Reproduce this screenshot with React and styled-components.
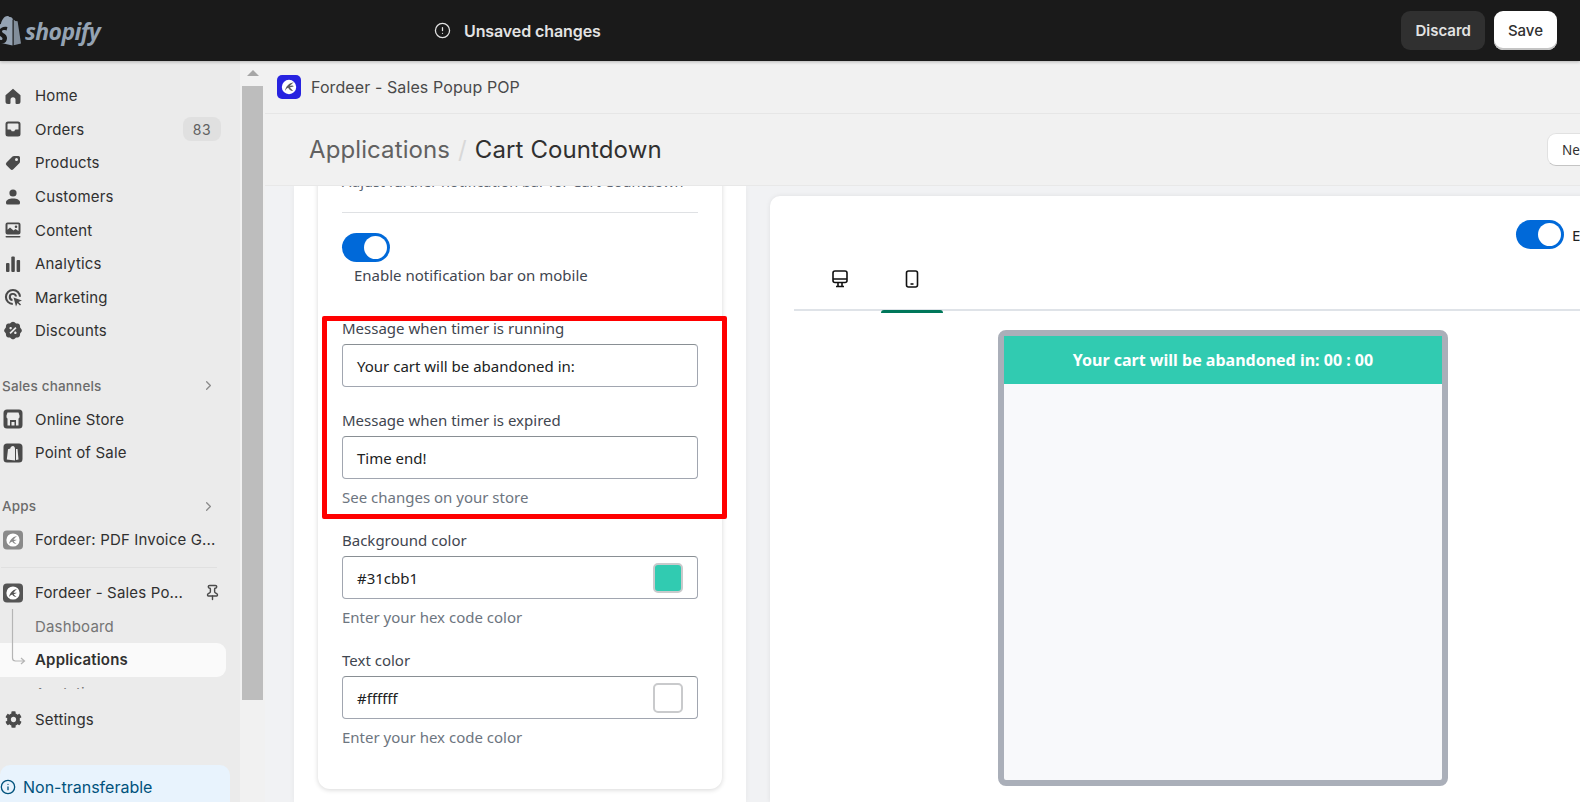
import styled, { createGlobalStyle } from 'styled-components';
import { CircleAlert, ChevronRight, Pin, Info } from 'lucide-react';
import { FaCog } from 'react-icons/fa';
import { RiDiscountPercentFill } from 'react-icons/ri';

const GlobalStyle = createGlobalStyle`
  html, body { margin: 0; padding: 0; height: 802px; overflow: hidden; background: #f1f2f4; }
  * { box-sizing: border-box; }
  body { font-family: Inter, "Liberation Sans", sans-serif; }
`;

const Page = styled.div`
  width: 1580px;
  height: 802px;
  display: flex;
  flex-direction: column;
  overflow: hidden;
`;

// 顶部黑条
const TopBar = styled.header`
  height: 61px;
  flex: none;
  background: #1a1a1a;
  display: flex;
  align-items: center;
  box-shadow: 0 1px 3px rgba(0, 0, 0, 0.25);
  position: relative;
  z-index: 2;
`;
const Logo = styled.div`
  width: 240px;
  margin-left: -3px;
  display: flex;
  align-items: center;
  gap: 4px;
  color: #95a3b3;
`;
const LogoWord = styled.span`
  font: italic 700 23px "Open Sans", sans-serif;
  letter-spacing: -0.6px;
  color: #95a3b3;
`;
const Unsaved = styled.div`
  margin-left: 197px;
  display: flex;
  align-items: center;
  gap: 13px;
  color: #e3e3e3;
  font-size: 16px;
  font-weight: 600;
  letter-spacing: -0.1px;
`;
const Actions = styled.div`
  margin-left: auto;
  margin-right: 23px;
  display: flex;
  gap: 9px;
`;
const BarButton = styled.button`
  height: 39px;
  border: 0;
  border-radius: 9px;
  padding: 0 14px;
  font: ${(p) => (p.$primary ? 500 : 600)} 15px Inter, sans-serif;
  color: ${(p) => (p.$primary ? '#303030' : '#e3e3e3')};
  background: ${(p) => (p.$primary ? '#fff' : '#303030')};
  box-shadow: ${(p) => (p.$primary ? 'inset 0 -2px 0 #c4c4c4' : 'none')};
`;

const Body = styled.div`
  flex: 1;
  display: flex;
  min-height: 0;
`;

// 左侧导航
const Sidebar = styled.nav`
  width: 240px;
  flex: none;
  background: #ebebeb;
  padding-top: 18px;
  overflow: hidden;
`;
const Row = styled.div`
  height: 33.6px;
  width: ${(p) => (p.$wide ? '226px' : '221px')};
  display: flex;
  align-items: center;
  padding-left: 3px;
  color: #303030;
  font-size: 15px;
  letter-spacing: 0.18px;
  margin-top: ${(p) => p.$top || 0}px;
`;
const RowIcon = styled.span`
  width: 20px;
  height: 20px;
  flex: none;
  margin-right: 12px;
  display: flex;
  align-items: center;
  justify-content: center;
  color: #4a4a4a;
`;
const RowLabel = styled.span`
  flex: 1;
  white-space: nowrap;
`;
const Badge = styled.span`
  width: 38px;
  height: 24px;
  border-radius: 8px;
  background: #e0e0e0;
  color: #616161;
  font-size: 14px;
  letter-spacing: 0.6px;
  display: flex;
  align-items: center;
  justify-content: center;
`;
const SectionRow = styled(Row)`
  padding-left: 2px;
  color: #6b6b6b;
  font-size: 13.5px;
  font-weight: 500;
  padding-right: 5px;
  justify-content: space-between;
`;
const Divider = styled.div`
  width: 216px;
  height: 1px;
  margin: 10px 0 8px 1px;
  background: #e0e0e0;
`;
const SubNav = styled.div`
  position: relative;
  height: 80px;
  overflow: hidden;
`;
const SubRow = styled.div`
  height: 33.6px;
  width: 226px;
  display: flex;
  align-items: center;
  padding-left: 35px;
  font-size: 15px;
  letter-spacing: 0.18px;
  font-weight: ${(p) => (p.$active ? 600 : 400)};
  color: ${(p) => (p.$active ? '#303030' : '#757575')};
  background: ${(p) => (p.$active ? '#fafafa' : 'transparent')};
  border-radius: 0 9px 9px 0;
`;
const Connector = styled.svg`
  position: absolute;
  left: 10px;
  top: 0;
`;
const Notice = styled.div`
  margin-top: 29px;
  width: 230px;
  height: 60px;
  background: #e8f3fd;
  border-radius: 10px;
  padding: 12px 0 0 0;
  display: flex;
  gap: 7px;
  align-items: flex-start;
  color: #00527c;
  font-size: 16px;
  line-height: 20px;
`;

// 滚动条
const ScrollTrack = styled.div`
  width: 25px;
  flex: none;
  background: #f1f1f1;
  padding: 9px 2px 0 2px;
  display: flex;
  flex-direction: column;
  align-items: center;
`;
const ScrollArrow = styled.div`
  width: 0;
  height: 0;
  border-left: 6px solid transparent;
  border-right: 6px solid transparent;
  border-bottom: 6px solid #a6a6a6;
`;
const ScrollThumb = styled.div`
  width: 21px;
  height: 614px;
  margin-top: 10px;
  background: #bdbdbd;
`;

const Main = styled.main`
  flex: 1;
  min-width: 0;
  display: flex;
  flex-direction: column;
  overflow: hidden;
`;
const AppBar = styled.div`
  height: 53px;
  flex: none;
  padding-left: 12px;
  display: flex;
  align-items: center;
  gap: 10px;
  background: #f1f1f1;
  border-bottom: 1px solid #e6e6e6;
  color: #4a4a4a;
  font-size: 16px;
  letter-spacing: 0.1px;
`;
const AppLogo = styled.span`
  width: 24px;
  height: 24px;
  border-radius: 5px;
  background: #2723e0;
  display: flex;
  align-items: center;
  justify-content: center;
`;
const PageHeader = styled.div`
  height: 72px;
  flex: none;
  padding-left: 44px;
  display: flex;
  align-items: center;
  background: #f1f1f1;
  border-bottom: 1px solid #e8e8e8;
  position: relative;
  z-index: 1;
  font-size: 24px;
  letter-spacing: 0.1px;
`;
const Crumb = styled.span`
  color: #616161;
`;
const CrumbSep = styled.span`
  color: #d8d8d8;
  margin: 0 8px;
`;
const CrumbNow = styled.span`
  color: #303030;
`;
const HelpButton = styled.button`
  margin-left: auto;
  margin-right: -70px;
  flex: none;
  width: 103px;
  height: 33px;
  border: 1px solid #e1e1e1;
  border-bottom-color: #c4c4c4;
  border-radius: 9px;
  background: #fff;
  padding: 0 0 0 14px;
  text-align: left;
  color: #303030;
  font: 13.5px "Noto Sans", sans-serif;
`;

const Content = styled.div`
  flex: 1;
  min-height: 0;
  display: flex;
  gap: 24px;
  padding-left: 29px;
  background: #f1f2f4;
  overflow: hidden;
  font-family: "Noto Sans", sans-serif;
`;
const LeftColumn = styled.section`
  width: 452px;
  flex: none;
  background: #fff;
  padding: 0 24px;
  box-shadow: 0 0 6px rgba(0, 0, 0, 0.05);
`;
const FormCard = styled.div`
  height: 619px;
  margin-top: -16px;
  padding: 0 24px;
  background: #fff;
  border-radius: 0 0 12px 12px;
  box-shadow: 0 1px 5px rgba(0, 0, 0, 0.16);
`;
const CutLine = styled.div`
  height: 22px;
  line-height: 22px;
  font-size: 14.5px;
  color: #5c6470;
  white-space: nowrap;
`;
const CardRule = styled.div`
  height: 1px;
  margin: 20px 0 20px;
  background: #dfe1e4;
`;
const Toggle = styled.span`
  width: 48px;
  height: 29px;
  flex: none;
  display: block;
  padding: 3px;
  border-radius: 15px;
  background: #0069d9;
  &::after {
    content: '';
    display: block;
    width: 23px;
    height: 23px;
    margin-left: 19px;
    border-radius: 50%;
    background: #fff;
  }
`;
const ToggleLabel = styled.div`
  margin: 3px 0 33px 12px;
  height: 20px;
  line-height: 20px;
  font-size: 15px;
  color: #3f4650;
`;
const Marked = styled.div`
  position: relative;
`;
const RedBox = styled.div`
  position: absolute;
  left: -20px;
  right: -29px;
  top: -2px;
  bottom: -12px;
  border: 5px solid #ff0000;
  border-radius: 2px;
  pointer-events: none;
`;
const Field = styled.div`
  margin-top: ${(p) => (p.$first ? 0 : 23)}px;
`;
const FieldLabel = styled.div`
  height: 20px;
  line-height: 20px;
  margin-bottom: 6px;
  font-size: 15px;
  color: #3f4650;
`;
const InputBox = styled.div`
  height: 43px;
  padding: 0 14px;
  display: flex;
  align-items: center;
  justify-content: space-between;
  border: 1px solid #a1a6b0;
  border-top-color: #898f94;
  border-radius: 4px;
  background: #fff;
  font-size: 15px;
  color: #202223;
`;
const Swatch = styled.span`
  width: 30px;
  height: 30px;
  border: 2px solid #c9cacc;
  border-radius: 5px;
  background: ${(p) => p.$color};
`;
const Hint = styled.div`
  height: 20px;
  line-height: 20px;
  margin-top: 8px;
  font-size: 15px;
  color: #6d7580;
`;

const PreviewPanel = styled.section`
  width: 906px;
  flex: none;
  margin-top: 10px;
  padding: 24px 24px 0;
  background: #fff;
  border-radius: 10px 10px 0 0;
  box-shadow: 0 0 5px rgba(0, 0, 0, 0.08);
`;
const PreviewToggleRow = styled.div`
  margin-left: 722px;
  display: flex;
  align-items: center;
  gap: 8px;
  font-size: 15px;
  color: #202223;
  white-space: nowrap;
`;
const Tabs = styled.div`
  height: 50px;
  margin-top: 12px;
  padding-left: 15px;
  display: flex;
  gap: 10px;
  border-bottom: 2px solid #dfe3e8;
`;
const Tab = styled.div`
  position: relative;
  width: 62px;
  height: 50px;
  display: flex;
  align-items: center;
  justify-content: center;
  padding-bottom: 14px;
  color: #111;
  &::after {
    content: '';
    display: ${(p) => (p.$active ? 'block' : 'none')};
    position: absolute;
    left: 0;
    right: 0;
    bottom: -2px;
    height: 3px;
    border-radius: 3px 3px 0 0;
    background: #00775a;
  }
`;
const PreviewStage = styled.div`
  margin-top: 19px;
  display: flex;
  justify-content: center;
`;
const PhoneFrame = styled.div`
  width: 450px;
  height: 456px;
  border: 6px solid #aaafb9;
  border-radius: 8px;
  background: #f8f9fb;
`;
const PhoneBar = styled.div`
  height: 48px;
  background: #31cbb1;
  color: #fff;
  font-size: 16px;
  font-weight: 700;
  display: flex;
  align-items: center;
  justify-content: center;
`;

const FordeerMark = ({ size = 16 }) => (
  <svg width={size} height={size} viewBox="0 0 20 20">
    <circle cx="10" cy="10" r="9" fill="#fff" />
    <path d="M5 15C6 9 10 5 16 4c-2 2-4 3-5 5 2-1 4-1 5 0-2 1-4 1-5 2 1 1 3 2 4 4-3 0-5-2-6-4-2 1-3 2-4 4z" fill="#5d5d5d" />
  </svg>
);

const FordeerIcon = ({ muted }) => (
  <svg width="20" height="20" viewBox="0 0 20 20">
    <rect x="0" y="0.5" width="20" height="19" rx="4" fill={muted ? '#8a8a8a' : '#555'} />
    <circle cx="10" cy="10" r="6.6" fill="#fff" />
    <path d="M6 14c1-4 3-7 8-8-1.500 1.500-3 2.500-3.500 4 1.500-.5 2.500-.5 3.500 0-1.500.5-2.500.8-3.300 1.500.8.8 1.800 1.500 2.800 2.500-2 0-3.500-1-4.300-2.500C7.700 12 7 13 6 14z" fill={muted ? '#8a8a8a' : '#555'} />
  </svg>
);

const NavSvg = ({ children, size = 20 }) => (
  <svg width={size} height={size} viewBox="0 0 20 20" fill="currentColor" fillRule="evenodd">
    {children}
  </svg>
);

const HomeIcon = () => (
  <NavSvg><path d="M2.500 9.200 10 2.700l7.500 6.500V15.500a2.500 2.500 0 0 1-2.500 2.500h-1.500a1 1 0 0 1-1-1v-3.200a2.500 2.500 0 0 0-5 0V17a1 1 0 0 1-1 1H5a2.500 2.500 0 0 1-2.500-2.500z" /></NavSvg>
);
const OrdersIcon = () => (
  <NavSvg><path d="M5 2.500h10A2.500 2.500 0 0 1 17.500 5v10a2.500 2.500 0 0 1-2.500 2.500H5A2.500 2.500 0 0 1 2.500 15V5A2.500 2.500 0 0 1 5 2.500zM5.300 4.500a.8.8 0 0 0-.8.8V10.500h2.700c.5 0 .8.200 1 .7l.5 1h2.600l.5-1c.2-.5.5-.7 1-.7h2.700V5.300a.8.8 0 0 0-.8-.8z" /></NavSvg>
);
const ProductsIcon = () => (
  <NavSvg><path d="M11.500 3h4A1.500 1.500 0 0 1 17 4.500v4a2.500 2.500 0 0 1-.7 1.800l-6 6a2 2 0 0 1-2.800 0l-4-4a2 2 0 0 1 0-2.800l6-6A2.500 2.500 0 0 1 11.500 3zM13.500 5a1.500 1.500 0 1 0 0 3 1.500 1.500 0 0 0 0-3z" /></NavSvg>
);
const CustomersIcon = () => (
  <NavSvg>
    <circle cx="10" cy="6" r="3.600" />
    <path d="M3 15.500c0-2.500 3-4 7-4s7 1.500 7 4v.5a1.500 1.500 0 0 1-1.500 1.500h-11A1.500 1.500 0 0 1 3 16z" />
  </NavSvg>
);
const ContentIcon = () => (
  <NavSvg>
    <path d="M4.500 2.500h11A2 2 0 0 1 17.500 4.500v8a2 2 0 0 1-2 2h-11a2 2 0 0 1-2-2v-8a2 2 0 0 1 2-2zM4.500 4.300v5.400l2.500-2.200 3.500 3 2-1.500 3 2V4.300zM13 5.500a1.300 1.300 0 1 1 0 2.600 1.300 1.300 0 0 1 0-2.600z" />
    <rect x="2.500" y="16" width="15" height="1.600" rx=".8" />
  </NavSvg>
);
const AnalyticsIcon = () => (
  <NavSvg>
    <rect x="3" y="9" width="3.500" height="9" rx="1" />
    <rect x="8.300" y="2.500" width="3.500" height="15.500" rx="1" />
    <rect x="13.600" y="6" width="3.500" height="12" rx="1" />
  </NavSvg>
);
const MarketingIcon = () => (
  <NavSvg>
    <path d="M10 2a8 8 0 0 1 8 7.800h-2A6 6 0 1 0 9.800 16v2A8 8 0 0 1 10 2z" />
    <path d="M10 6a4 4 0 0 1 4 3.500h-2A2.100 2.100 0 1 0 9.500 12v2A4 4 0 0 1 10 6z" />
    <path d="M10.500 10.500 19 13.500l-3.500 1.500 2.500 2.500-1 1-2.500-2.500-1.500 3.500z" />
  </NavSvg>
);
const StoreIcon = () => (
  <NavSvg>
    <path d="M4 .5h12A3.500 3.500 0 0 1 19.500 4v12a3.500 3.500 0 0 1-3.500 3.500H4A3.500 3.500 0 0 1 .5 16V4A3.500 3.500 0 0 1 4 .5zM4.500 3.500 3.500 6.500v1.500a1.800 1.800 0 0 0 1 1.500V16.500h11V9.500a1.800 1.800 0 0 0 1-1.500V6.500l-1-3zM7 11h6v5.500h-1.500V13h-3v3.500H7z" />
  </NavSvg>
);
const PosIcon = () => (
  <NavSvg>
    <path d="M4 .5h12A3.500 3.500 0 0 1 19.500 4v12a3.500 3.500 0 0 1-3.500 3.500H4A3.500 3.500 0 0 1 .5 16V4A3.500 3.500 0 0 1 4 .5zM10 3C8.500 3 7.500 4 7.300 5.500L5 6.200 3.800 16.500 12 17.500V5.800C11.800 4 11 3 10 3zM13 6v11l2.500-.5L14.500 6z" />
    <path d="M9.800 8.500c-1.500-.3-2.500.5-2.500 1.500 0 1.500 2 1.500 2 2.500 0 .5-.8.800-2 .3l-.3 1.200c1.800.6 3.500 0 3.500-1.600 0-1.500-2-1.600-2-2.500 0-.4.500-.6 1.200-.4z" fill="#ebebeb" />
  </NavSvg>
);

const ShopifyBag = () => (
  <svg width="24" height="30" viewBox="0 0 24 30" fill="currentColor">
    <path d="M16 3.500c-.3-1-1-2.500-3-2.500-.2 0-.4 0-.5.100C11.900.400 11.300 0 10.700 0 6.500 0 4.500 5.200 3.900 7.900L1 8.800C.2 9 .2 9.100 0 10L-1 26l16.500 3.500V3.700z" />
    <path d="M16.700 3.600l1.600 1.500 2.300.2L24 27.500l-7.300 1.800z" opacity=".85" />
    <path d="M10.500 11.200l-1 3.300s-1.200-.6-2.500-.5c-2-.1-2 1.200-2 1.500.1 1.800 4.700 2.200 5 6.300.2 3.300-1.800 5.500-4.600 5.700-3.400.2-5.200-1.800-5.200-1.800l.7-3s1.800 1.400 3.300 1.300c1 0 1.300-.8 1.300-1.300-.2-2.300-3.900-2.100-4.200-5.900C1.600 14 3.600 11 8 10.700c1.700-.1 2.500.5 2.500.5z" fill="#1a1a1a" />
  </svg>
);

const DesktopIcon = () => (
  <svg width="16" height="18" viewBox="0 0 16 18" fill="none" stroke="currentColor" strokeWidth="1.600">
    <rect x="1" y="1" width="14" height="11.500" rx="2" />
    <path d="M1 9h14M6 12.500v3.500M10 12.500v3.500M4 16.500h8" />
  </svg>
);
const MobileIcon = () => (
  <svg width="14" height="18" viewBox="0 0 14 18" fill="none" stroke="currentColor" strokeWidth="1.600">
    <rect x="1.500" y="1" width="11" height="16" rx="2" />
    <path d="M5.500 14h3" />
  </svg>
);

const mainNav = [
  { label: 'Home', icon: <HomeIcon /> },
  { label: 'Orders', icon: <OrdersIcon />, badge: 83 },
  { label: 'Products', icon: <ProductsIcon /> },
  { label: 'Customers', icon: <CustomersIcon /> },
  { label: 'Content', icon: <ContentIcon /> },
  { label: 'Analytics', icon: <AnalyticsIcon /> },
  { label: 'Marketing', icon: <MarketingIcon /> },
  { label: 'Discounts', icon: <RiDiscountPercentFill size={21} /> },
];

const NavRow = ({ icon, label, children, ...rest }) => (
  <Row {...rest}>
    <RowIcon>{icon}</RowIcon>
    <RowLabel>{label}</RowLabel>
    {children}
  </Row>
);

const ColorField = ({ label, value }) => (
  <Field>
    <FieldLabel>{label}</FieldLabel>
    <InputBox>
      {value}
      <Swatch $color={value} />
    </InputBox>
    <Hint>Enter your hex code color</Hint>
  </Field>
);

export default function App() {
  return (
    <Page>
      <GlobalStyle />
      <TopBar>
        <Logo>
          <ShopifyBag />
          <LogoWord>shopify</LogoWord>
        </Logo>
        <Unsaved>
          <CircleAlert size={17} strokeWidth={1.8} />
          Unsaved changes
        </Unsaved>
        <Actions>
          <BarButton>Discard</BarButton>
          <BarButton $primary>Save</BarButton>
        </Actions>
      </TopBar>
      <Body>
        <Sidebar>
          {mainNav.map((item) => (
            <NavRow key={item.label} icon={item.icon} label={item.label}>
              {item.badge && <Badge>{item.badge}</Badge>}
            </NavRow>
          ))}
          <SectionRow $top={21}>
            Sales channels
            <ChevronRight size={15} color="#8a8a8a" />
          </SectionRow>
          <NavRow icon={<StoreIcon />} label="Online Store" />
          <NavRow icon={<PosIcon />} label="Point of Sale" />
          <SectionRow $top={20}>
            Apps
            <ChevronRight size={15} color="#8a8a8a" />
          </SectionRow>
          <NavRow icon={<FordeerIcon muted />} label="Fordeer: PDF Invoice G..." />
          <Divider />
          <NavRow icon={<FordeerIcon />} label="Fordeer - Sales Po...">
            <Pin size={17} color="#4a4a4a" />
          </NavRow>
          <SubNav>
            <SubRow>Dashboard</SubRow>
            <SubRow $active>Applications</SubRow>
            <SubRow>Analytics</SubRow>
            <Connector width="18" height="62" viewBox="0 0 18 62" fill="none" stroke="#b5b5b5" strokeWidth="1.200">
              <path d="M2.500 0V49a3 3 0 0 0 3 3H14M11 49l3.500 3-3.500 3" />
            </Connector>
          </SubNav>
          <NavRow $top={13} icon={<FaCog size={17} />} label="Settings" />
          <Notice>
            <Info size={16} style={{ marginTop: 2 }} />
            Non-transferable
          </Notice>
        </Sidebar>
        <ScrollTrack>
          <ScrollArrow />
          <ScrollThumb />
        </ScrollTrack>
        <Main>
          <AppBar>
            <AppLogo><FordeerMark /></AppLogo>
            Fordeer - Sales Popup POP
          </AppBar>
          <PageHeader>
            <Crumb>Applications</Crumb>
            <CrumbSep>/</CrumbSep>
            <CrumbNow>Cart Countdown</CrumbNow>
            <HelpButton>Need help</HelpButton>
          </PageHeader>
          <Content>
            <LeftColumn>
              <FormCard>
                <CutLine>Adjust further notification bar for Cart Countdown</CutLine>
                <CardRule />
                <Toggle />
                <ToggleLabel>Enable notification bar on mobile</ToggleLabel>
                <Marked>
                  <Field $first>
                    <FieldLabel>Message when timer is running</FieldLabel>
                    <InputBox>Your cart will be abandoned in:</InputBox>
                  </Field>
                  <Field>
                    <FieldLabel>Message when timer is expired</FieldLabel>
                    <InputBox>Time end!</InputBox>
                    <Hint>See changes on your store</Hint>
                  </Field>
                  <RedBox />
                </Marked>
                <ColorField label="Background color" value="#31cbb1" />
                <ColorField label="Text color" value="#ffffff" />
              </FormCard>
            </LeftColumn>
            <PreviewPanel>
              <PreviewToggleRow>
                <Toggle />
                Enable
              </PreviewToggleRow>
              <Tabs>
                <Tab><DesktopIcon /></Tab>
                <Tab $active><MobileIcon /></Tab>
              </Tabs>
              <PreviewStage>
                <PhoneFrame>
                  <PhoneBar>Your cart will be abandoned in: 00 : 00</PhoneBar>
                </PhoneFrame>
              </PreviewStage>
            </PreviewPanel>
          </Content>
        </Main>
      </Body>
    </Page>
  );
}
